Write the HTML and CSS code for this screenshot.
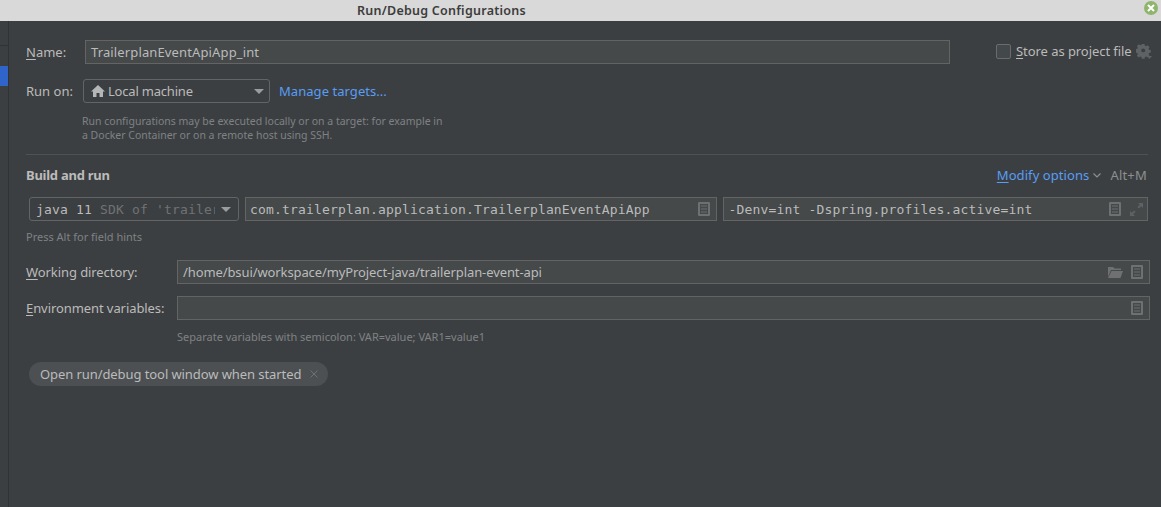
FILE: index.html
```html
<!DOCTYPE html>
<html lang="en">
<head>
    <meta charset="UTF-8">
    <title>Run/Debug Configurations</title>
    <link rel="stylesheet" href="styles.css">
</head>
<body>
    <svg class="defs" width="0" height="0">
        <symbol id="doc" viewBox="0 0 12 14">
            <path fill="#6e7072" fill-rule="evenodd" d="M1 0h10a1 1 0 0 1 1 1v12a1 1 0 0 1-1 1H1a1 1 0 0 1-1-1V1a1 1 0 0 1 1-1zm1 2v10h8V2zm1 1.500h6v1H3zm0 3h6v1H3zm0 3h6v1H3z"/>
        </symbol>
    </svg>

    <div class="titlebar">
        <span class="title">Run/Debug Configurations</span>
        <span class="close">
            <svg width="8" height="8" viewBox="0 0 8 8"><path d="M1 1l6 6M7 1L1 7" stroke="#fff" stroke-width="2"/></svg>
        </span>
    </div>

    <div class="main">
        <div class="sidebar">
            <div class="side-line"></div>
            <div class="side-selected"></div>
        </div>
        <div class="content">
            <div class="row name-row">
                <label class="label name-label"><u>N</u>ame:</label>
                <div class="field name-field">TrailerplanEventApiApp_int</div>
                <div class="store">
                    <span class="checkbox"></span>
                    <span class="store-text"><u>S</u>tore as project file</span>
                    <svg class="gear" width="16" height="16" viewBox="0 0 16 16">
                        <path fill="#5f6264" fill-rule="evenodd" d="M6.500 1h3l.4 2 1.300.6 1.800-1.100 2 2.100-1.100 1.700.6 1.300 2 .4v2.600l-2 .5-.6 1.300 1.100 1.700-2 2-1.800-1.100-1.300.6-.4 1.900h-3l-.4-1.900-1.300-.6-1.800 1.100-2-2 1.100-1.700-.6-1.300-2-.5V6.900l2-.4.6-1.300-1.100-1.700 2-2.100 1.800 1.100 1.300-.6zM8 6a2.200 2.200 0 1 0 0 4.400A2.200 2.200 0 0 0 8 6z" transform="scale(.9)"/>
                        <path fill="#5f6264" d="M11 13h5l-2.500 3z"/>
                    </svg>
                </div>
            </div>

            <div class="row runon-row">
                <span class="label runon-label">Run on:</span>
                <div class="combo runon-combo">
                    <svg class="home" width="14" height="12" viewBox="0 0 14 12"><path fill="#b4b6b8" d="M7 0l7 6.500h-2V12H8.500V8h-3v4H2V6.500H0z"/></svg>
                    <span class="combo-text">Local machine</span>
                    <span class="arrow"></span>
                </div>
                <a class="link manage">Manage targets...</a>
            </div>

            <div class="help run-help">Run configurations may be executed locally or on a target: for example in<br>a Docker Container or on a remote host using SSH.</div>

            <div class="separator"></div>

            <div class="section-head">
                <span class="section-title">Build and run</span>
                <a class="link modify"><u>M</u>odify options</a>
                <svg class="chevron" width="8" height="5" viewBox="0 0 8 5"><path d="M.5.500L4 4 7.500.500" fill="none" stroke="#8c8f91" stroke-width="1.200"/></svg>
                <span class="shortcut">Alt+M</span>
            </div>

            <div class="build-row">
                <div class="combo jdk-combo mono">
                    <span class="jdk-text">java 11 <span class="dim">SDK of 'trailer</span></span>
                    <span class="arrow"></span>
                </div>
                <div class="field main-class mono">
                    <span class="grow">com.trailerplan.application.TrailerplanEventApiApp</span>
                    <svg class="icon" width="12" height="14"><use href="#doc"/></svg>
                </div>
                <div class="field vm-options mono">
                    <span class="grow">-Denv=int -Dspring.profiles.active=int</span>
                    <svg class="icon" width="12" height="14"><use href="#doc"/></svg>
                    <svg class="expand" width="13" height="13" viewBox="0 0 13 13"><path fill="#5f6264" d="M8 0h5v5l-1.800-1.800-2.400 2.400-1.400-1.400 2.400-2.400zM5 13H0V8l1.800 1.800 2.400-2.400 1.400 1.400-2.400 2.400z"/></svg>
                </div>
            </div>

            <div class="help alt-hint">Press Alt for field hints</div>

            <div class="row workdir-row">
                <label class="label wide-label"><u>W</u>orking directory:</label>
                <div class="field wide-field">
                    <span class="grow workdir-text">/home/bsui/workspace/myProject-java/trailerplan-event-api</span>
                    <svg class="folder" width="15" height="12" viewBox="0 0 15 12"><path fill="#6e7072" d="M0 1h5l1.500 1.500H13V4H3L0 11zM3.500 5H15l-2.500 7H0z"/></svg>
                    <svg class="icon" width="12" height="14"><use href="#doc"/></svg>
                </div>
            </div>

            <div class="row env-row">
                <label class="label wide-label"><u>E</u>nvironment variables:</label>
                <div class="field wide-field">
                    <span class="grow"></span>
                    <svg class="icon" width="12" height="14"><use href="#doc"/></svg>
                </div>
            </div>

            <div class="help env-hint">Separate variables with semicolon: VAR=value; VAR1=value1</div>

            <div class="chip">
                <span class="chip-text">Open run/debug tool window when started</span>
                <svg class="chip-x" width="8" height="8" viewBox="0 0 8 8"><path d="M.5.500l7 7M7.500.500l-7 7" stroke="#6e7072"/></svg>
            </div>
        </div>
    </div>
</body>
</html>
```

FILE: styles.css
```css
html, body {
    height: 100%;
}
body {
    margin: 0;
    display: flex;
    flex-direction: column;
    background-color: #3c3f41;
    color: #bbbbbb;
    font-family: "Noto Sans", sans-serif;
    font-size: 13px;
    overflow: hidden;
}
.defs {
    display: none;
}
.titlebar {
    height: 21px;
    flex: none;
    display: flex;
    align-items: center;
    justify-content: space-between;
    padding: 0 3px 0 357px;
    box-sizing: border-box;
    background-color: #d9d9d9;
    color: #3c3c3c;
    font-size: 12.500px;
    font-weight: 600;
    letter-spacing: 0.250px;
}
.close {
    width: 14px;
    height: 14px;
    margin-bottom: 5px;
    border-radius: 50%;
    background-color: #8fb56c;
    display: flex;
    align-items: center;
    justify-content: center;
}
.main {
    flex: 1;
    display: flex;
}
.sidebar {
    width: 8px;
    flex: none;
    border-right: 1px solid #323232;
}
.side-line {
    height: 24px;
    border-bottom: 1px solid #323232;
    box-sizing: content-box;
}
.side-selected {
    height: 20px;
    margin-top: 20px;
    background-color: #2f65ca;
}
.content {
    flex: 1;
    min-width: 0;
    padding: 0 11px 0 17px;
}
.row {
    display: flex;
    align-items: center;
    height: 24px;
}
u {
    text-underline-offset: 2px;
}
.label {
    white-space: nowrap;
}
.field {
    height: 24px;
    box-sizing: border-box;
    display: flex;
    align-items: center;
    background-color: #45494a;
    border: 1px solid #646464;
    padding: 0 5px;
    color: #bbbbbb;
    white-space: nowrap;
}
.grow {
    flex: 1;
    overflow: hidden;
}
.mono {
    font-family: "DejaVu Sans Mono", monospace;
    font-size: 13px;
    letter-spacing: 0.170px;
}
.combo {
    height: 24px;
    box-sizing: border-box;
    display: flex;
    align-items: center;
    border: 1px solid #646464;
    border-radius: 3px;
    background-color: #3c3f41;
}
.arrow {
    width: 0;
    height: 0;
    flex: none;
    border-left: 5px solid transparent;
    border-right: 5px solid transparent;
    border-top: 5px solid #9a9d9f;
}
.link {
    color: #589df6;
}
.help {
    font-size: 11px;
    line-height: 14px;
    color: #7f8285;
}
.name-row {
    margin-top: 19px;
}
.name-label {
    width: 59px;
    flex: none;
}
.name-field {
    width: 865px;
    flex: none;
    letter-spacing: 0.130px;
}
.store {
    display: flex;
    align-items: center;
    margin: -2px 0 0 46px;
}
.checkbox {
    width: 13px;
    height: 13px;
    flex: none;
    border: 1px solid #6b6b6b;
    border-radius: 2px;
    background-color: #43494a;
}
.store-text {
    margin-left: 5px;
    white-space: nowrap;
    letter-spacing: -0.060px;
}
.gear {
    flex: none;
    margin-left: 4px;
}
.runon-row {
    margin-top: 15px;
}
.runon-label {
    width: 57px;
}
.runon-combo {
    width: 187px;
    padding: 0 5px 0 7px;
}
.home {
    margin-right: 3px;
}
.combo-text {
    flex: 1;
    letter-spacing: -0.200px;
}
.manage {
    margin-left: 9px;
    letter-spacing: 0.050px;
}
.run-help {
    margin-top: 11px;
    margin-left: 56px;
    font-size: 10.500px;
}
.separator {
    height: 1px;
    margin: 12px 2px 0 0;
    background-color: #515151;
}
.section-head {
    display: flex;
    align-items: center;
    height: 20px;
    margin: 10px 3px 0 0;
}
.section-title {
    flex: 1;
    font-weight: 700;
    letter-spacing: -0.250px;
}
.modify {
    letter-spacing: 0.080px;
}
.chevron {
    margin-left: 4px;
}
.shortcut {
    margin-left: 9px;
    color: #8c8f91;
    letter-spacing: 0.200px;
}
.build-row {
    display: flex;
    gap: 6px;
    margin: 12px 2px 0 3px;
}
.jdk-combo {
    width: 210px;
    flex: none;
    padding: 0 7px 0 6px;
}
.jdk-text {
    flex: 1;
    overflow: hidden;
    white-space: nowrap;
    margin-right: 6px;
}
.dim {
    color: #6f7274;
}
.main-class {
    width: 472px;
    flex: none;
    padding-left: 4px;
}
.main-class .icon {
    margin-right: 1px;
}
.vm-options {
    flex: 1;
    padding-right: 4px;
}
.vm-options .grow {
    margin-left: -0.500px;
}
.icon {
    flex: none;
}
.expand {
    flex: none;
    margin-left: 9px;
}
.alt-hint {
    margin-top: 9px;
}
.workdir-row {
    margin-top: 16px;
}
.env-row {
    margin-top: 12px;
}
.wide-label {
    width: 151px;
    flex: none;
    letter-spacing: -0.080px;
}
.wide-field {
    flex: 1;
}
.wide-field .icon {
    margin-right: 1px;
}
.workdir-text {
    letter-spacing: -0.100px;
}
.folder {
    flex: none;
    margin-right: 8px;
}
.env-hint {
    margin-top: 10px;
    margin-left: 151px;
}
.chip {
    display: inline-flex;
    align-items: center;
    height: 24px;
    margin: 18px 0 0 3px;
    padding: 0 10px 0 11px;
    border-radius: 12px;
    background-color: #4c5052;
}
.chip-text {
    letter-spacing: -0.080px;
}
.chip-x {
    margin-left: 9px;
}
```
